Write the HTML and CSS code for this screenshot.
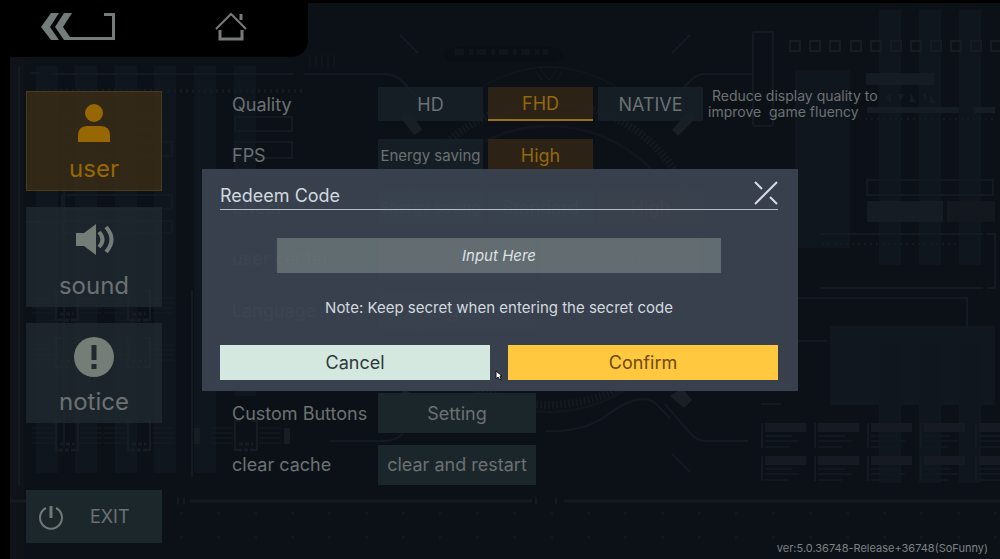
FILE: index.html
```html
<!DOCTYPE html>
<html lang="en">
	<head>
		<meta charset="UTF-8">
		<meta name="viewport" content="width=device-width, initial-scale=1">
		<title>Settings</title>
		<link rel="stylesheet" href="styles.css">
	</head>
	<body>
		<!-- circuit board behind the panels -->
		<svg class="backdrop" viewBox="0 0 1000 559" preserveAspectRatio="xMidYMid slice" aria-hidden="true">
			<defs>
				<pattern id="dots" width="37" height="24" patternUnits="userSpaceOnUse" x="15" y="512">
					<rect x="17" y="0" width="3" height="3" fill="#12171d"/>
				</pattern>
				<g id="card">
					<path d="M0 0v25" stroke="#141a21" stroke-width="2"/>
					<rect x="3" y="0" width="41" height="9" fill="#161b23"/>
					<path d="M3 13h27M3 18h34M3 24h24" stroke="#12181f" stroke-width="2"/>
				</g>
				<g id="chip" fill="none" stroke="#171c23">
					<path d="M5 0h-5v29h5M17 0h5v29h-5" stroke-width="2"/>
					<path d="M-24 7h22M-24 12h22M-24 17h22M-24 22h22M24 7h22M24 12h22M24 17h22M24 22h22"/>
					<path d="M4 23h14M3 29h16" stroke-width="3" stroke-dasharray="4 2"/>
				</g>
			</defs>
			<rect x="10" y="57" width="14" height="502" fill="#0f1317"/>
			<g fill="#10161d">
				<rect x="36" y="66" width="22" height="407"/>
				<rect x="75" y="66" width="22" height="407"/>
				<rect x="115" y="66" width="22" height="407"/>
				<rect x="154" y="66" width="22" height="407"/>
				<rect x="194" y="66" width="22" height="407"/>
				<rect x="234" y="66" width="22" height="330"/>
				<rect x="795" y="70" width="55" height="178"/>
				<rect x="879" y="10" width="22" height="255"/>
				<rect x="919" y="10" width="22" height="255"/>
				<rect x="959" y="10" width="22" height="255"/>
				<rect x="830" y="326" width="165" height="79" fill="#11171e"/>
				<rect x="879" y="345" width="22" height="138"/>
				<rect x="919" y="345" width="22" height="138"/>
				<rect x="959" y="345" width="22" height="138"/>
			</g>
			<g fill="none" stroke="#141a21" stroke-width="2">
				<path d="M19 66v420M53 74h240M30 73h10M192 290v186M26 222h38M26 117h38v330"/>
				<path d="M36 91h270" stroke-width="4" stroke-dasharray="2 4"/>
				<path d="M62 117h100v12h-100zM62 142h110v14h-110zM62 195h110v14h-110zM62 221h110v12h-110z"/>
				<path d="M235 117h57v14h-57zM235 142h57v16h-57z"/>
				<path d="M310 55v12M316 55v12M322 55v12M328 55v12M334 55v12" stroke-width="1"/>
				<path d="M304 74h82q10 0 18 9l22 25M400 35l18 18M690 35l-18 18M752 74h-48q-8 0-16 9l-22 25"/>
				<path d="M753 32h20v93M753 32v93M753 126h20"/>
				<path d="M867 180h126v15h-126zM820 234h163M987 234h8v54h-8M820 288h163M797 298h170v30M797 341h30"/>
				<path d="M822 244h138M865 119h130" stroke-dasharray="2 4"/>
				<path d="M330 441h55q12 0 20-10l18-20M748 441h-43q-8 0-16-9l-24-28M672 454l18 18M761 404h20"/>
				<path d="M545 431q40 2 65-18q35-25 50-5l10 10"/>
			</g>
			<g fill="none" stroke="#13191f">
				<circle cx="549" cy="254" r="151" stroke-width="8" stroke-dasharray="2 2"/>
				<circle cx="549" cy="269" r="143" stroke-width="3" stroke="#10161c"/>
				<path d="M450 110q99-86 198 0" stroke-width="1"/>
				<path d="M539 67h20l-10 13zM536 71l6 10M562 71l-6 10"/>
			</g>
			<g fill="#191f24">
				<path d="M406 112l8 4 8 14-8 5-13-17zM692 112l-8 4-12 14 6 6 16-16zM410 393l-9 13-5-5 8-13zM682 388l10 12-8 8-14-12z"/>
			</g>
			<path d="M444 52q4-5 18-5h82q14 0 18 5t-8 11h-96q-14 0-14-11z" fill="#0a0f15"/>
			<path d="M455 52h93" stroke="#0f151b" stroke-width="6" stroke-dasharray="9 5 4 4"/>
			<path d="M790 41h10v10h-10zM810 41h10v10h-10zM830 41h10v10h-10zM851 41h10v10h-10zM871 41h10v10h-10zM891 41h10v10h-10zM911 41h10v10h-10zM931 41h10v10h-10zM951 41h10v10h-10zM971 41h10v10h-10zM991 41h10v10h-10z" fill="none" stroke="#171c23" stroke-width="2"/>
			<g fill="#161c23">
				<rect x="866" y="73" width="68" height="12"/>
				<rect x="867" y="107" width="92" height="6"/>
				<rect x="973" y="107" width="22" height="6"/>
				<rect x="867" y="201" width="76" height="21"/>
				<rect x="947" y="201" width="48" height="21" fill="#12181e"/>
				<path d="M885 98l6-5v10zM898 94h6l-4 8zM910 93l6 9h-6zM922 93h4v9zM930 94l6 9h-6z"/>
			</g>
			<use href="#chip" x="56" y="291"/><use href="#chip" x="128" y="291"/>
			<use href="#chip" x="56" y="338"/><use href="#chip" x="128" y="338"/>
			<use href="#chip" x="56" y="421"/><use href="#chip" x="128" y="421"/><use href="#chip" x="235" y="421"/>
			<path d="M197 428v16M287 428v16" stroke="#171d23" stroke-width="6"/>
			<use href="#card" x="762" y="423"/><use href="#card" x="815" y="423"/><use href="#card" x="868" y="423"/><use href="#card" x="921" y="423"/><use href="#card" x="976" y="423"/>
			<use href="#card" x="762" y="456"/><use href="#card" x="815" y="456"/><use href="#card" x="868" y="456"/><use href="#card" x="921" y="456"/><use href="#card" x="976" y="456"/>
			<path d="M10 501h65M190 501h342M564 501h436" stroke="#141a20" stroke-width="3"/>
			<path d="M80 501h50M150 501h12M177 501h8M535 501h4M555 501h6" stroke="#141a20" stroke-width="7" stroke-dasharray="2 4"/>
			<rect x="180" y="512" width="820" height="47" fill="url(#dots)"/>
		</svg>

		<header class="topbar">
			<button class="nav-btn" type="button" aria-label="Back">
				<svg width="76" height="30" viewBox="0 0 76 30">
					<path d="M10 1h8L9 15l9 13h-8L0 15z" fill="#727c7a"/>
					<path d="M23 1h8l-9 14 7 10h42V4h-8V1h11v27H23l-9-13z" fill="#727c7a"/>
				</svg>
			</button>
			<button class="nav-btn" type="button" aria-label="Home">
				<svg width="32" height="30" viewBox="0 0 32 30" fill="none" stroke="#777c7b" stroke-width="3">
					<path d="M1 17L16 2l15 15" stroke-width="2"/>
					<path d="M5 18v9h22v-9"/>
					<path d="M26 2v6"/>
				</svg>
			</button>
		</header>

		<main class="panel">
			<nav class="sidebar">
				<button class="tab active" type="button">
					<svg width="44" height="44" viewBox="0 0 44 44" fill="currentColor">
						<circle cx="22" cy="12" r="9"/>
						<path d="M6 41v-6q0-10 9-10h14q9 0 9 10v6z"/>
					</svg>
					<span>user</span>
				</button>
				<button class="tab" type="button">
					<svg width="44" height="44" viewBox="0 0 44 44">
						<path d="M4 15h8l12-9v31l-12-9H4z" fill="#747d76"/>
						<path d="M27 14q7 7.500 0 15M34 9q11 12.500 0 25" fill="none" stroke="#747d76" stroke-width="4"/>
					</svg>
					<span>sound</span>
				</button>
				<button class="tab" type="button">
					<svg width="44" height="44" viewBox="0 0 44 44">
						<circle cx="22" cy="23" r="20" fill="#747d76"/>
						<path d="M22 11v15M22 30v5" stroke="#20292c" stroke-width="5"/>
					</svg>
					<span>notice</span>
				</button>
				<button class="exit" type="button">
					<svg width="26" height="26" viewBox="0 0 26 26" fill="none" stroke="#717877" stroke-width="2">
						<path d="M8 4a11 11 0 1 0 10 0"/>
						<path d="M13 2v12" stroke-width="3"/>
					</svg>
					<span>EXIT</span>
				</button>
			</nav>

			<section class="settings">
				<div class="row">
					<span class="name">Quality</span>
					<button class="opt" type="button">HD</button>
					<button class="opt on line" type="button">FHD</button>
					<button class="opt" type="button">NATIVE</button>
					<p class="hint">&nbsp;Reduce display quality to<br>improve &nbsp;game fluency</p>
				</div>
				<div class="row">
					<span class="name">FPS</span>
					<button class="opt small" type="button">Energy saving</button>
					<button class="opt on" type="button">High</button>
				</div>
				<div class="row">
					<span class="name">Effect</span>
					<button class="opt small" type="button">Energy saving</button>
					<button class="opt" type="button">Standard</button>
					<button class="opt on" type="button">High</button>
				</div>
				<div class="row">
					<span class="name">user center</span>
					<button class="opt wide" type="button"></button>
					<button class="opt wide" type="button">Facebook</button>
				</div>
				<div class="row">
					<span class="name">Language</span>
					<button class="opt wide" type="button">English</button>
				</div>
				<div class="row"></div>
				<div class="row">
					<span class="name">Custom Buttons</span>
					<button class="opt wide" type="button">Setting</button>
				</div>
				<div class="row">
					<span class="name">clear cache</span>
					<button class="opt wide" type="button">clear and restart</button>
				</div>
			</section>
		</main>

		<p class="version">ver:5.0.36748-Release+36748(SoFunny)</p>

		<div class="mask">
			<form class="dialog" role="dialog" aria-labelledby="dialogTitle">
				<div class="dialog-head">
					<label id="dialogTitle" for="code">Redeem Code</label>
					<button class="close" type="button" aria-label="Close">
						<svg width="24" height="24" viewBox="0 0 24 24" fill="none" stroke="#d4dce1" stroke-width="2">
							<path d="M23 1L1 23M1 1l7 7M16 16l7 7"/>
						</svg>
					</button>
				</div>
				<input class="code" id="code" type="text" placeholder="Input Here">
				<p class="note">Note: Keep secret when entering the secret code</p>
				<div class="actions">
					<button class="cancel" type="button">Cancel</button>
					<button class="confirm" type="button">Confirm</button>
				</div>
			</form>
		</div>

		<svg class="cursor" width="8" height="11" viewBox="0 0 8 11" aria-hidden="true">
			<path d="M1 1v8l2-2 2 3 1-1-1-3h2z" fill="#fff" stroke="#10151b" stroke-width="1"/>
		</svg>
	</body>
</html>
```

FILE: styles.css
```css
*{
	margin: 0;
	padding: 0;
	box-sizing: border-box;
}
body{
	display: flex;
	flex-direction: column;
	min-height: 100vh;
	background: #0c1118;
	border-top: 3px solid #000;
	color: #6c7173;
	font-family: Inter, "Noto Sans", sans-serif;
	font-size: 18px;
	font-weight: 400;
	position: relative;
	overflow: hidden;
}
button, input{
	border: 0;
	background: none;
	color: inherit;
	font: inherit;
}
button svg{
	display: block;
}
.backdrop{
	position: absolute;
	left: 0;
	top: -3px;
	width: 100%;
	height: 100vh;
}
/* top bar */
.topbar{
	position: relative;
	display: flex;
	align-items: center;
	gap: 98px;
	width: 308px;
	height: 54px;
	padding: 0 0 6px 41px;
	background: #000;
	border-radius: 0 0 16px 0;
}
/* main panel */
.panel{
	position: relative;
	flex: 1;
	display: flex;
	gap: 70px;
	border-left: 10px solid #000;
	padding: 27px 0 16px 16px;
}
.sidebar{
	display: flex;
	flex-direction: column;
	gap: 16px;
	width: 136px;
	padding-top: 7px;
}
.tab{
	display: flex;
	flex-direction: column;
	align-items: center;
	justify-content: flex-end;
	gap: 9px;
	height: 100px;
	padding-bottom: 6px;
	background: rgba(32, 43, 48, .75);
	font-size: 24px;
	line-height: 30px;
}
.tab.active{
	background: rgba(56, 43, 22, .85);
	border: 1px solid #4b3a17;
	color: #966703;
}
.exit{
	display: flex;
	align-items: center;
	gap: 26px;
	height: 53px;
	margin-top: auto;
	padding-left: 12px;
	background: #1c272c;
}
.settings{
	flex: 1;
	display: grid;
	grid-auto-rows: 40px;
	align-content: space-between;
	margin-bottom: 58px;
}
.row{
	display: flex;
	align-items: center;
	gap: 5px;
}
.name{
	width: 141px;
	white-space: nowrap;
}
.opt{
	width: 105px;
	height: 34px;
	background: rgba(24, 33, 40, .85);
	white-space: nowrap;
}
.opt.small{
	font-size: 15px;
}
.opt.on{
	background: rgba(49, 37, 22, .9);
	color: #93680f;
}
.opt.line{
	border-bottom: 2px solid #98701c;
}
.opt.wide{
	width: 158px;
	height: 40px;
	background: #1b262b;
}
.hint{
	font-size: 14px;
	line-height: 16px;
}
.version{
	position: absolute;
	right: 12px;
	bottom: 4px;
	color: #7d8183;
	font-size: 11px;
	line-height: 14px;
}
/* dialog */
.mask{
	position: absolute;
	left: 0;
	top: -3px;
	width: 100%;
	height: 100vh;
	display: flex;
	align-items: center;
	justify-content: center;
}
.dialog{
	display: flex;
	flex-direction: column;
	width: 596px;
	max-width: 100%;
	padding: 9px 20px 11px 18px;
	background: rgba(58, 67, 80, .96);
	color: #d2d9de;
}
.dialog-head{
	display: flex;
	align-items: center;
	justify-content: space-between;
	height: 32px;
	border-bottom: 1px solid #b4bcc3;
}
.dialog-head label{
	padding-top: 4px;
}
.close{
	height: 28px;
}
.code{
	height: 35px;
	margin: 28px 57px 0;
	background: rgba(116, 127, 128, .7);
	font-size: 15px;
	font-style: italic;
	text-align: center;
}
.code::placeholder{
	color: #dde2e2;
	opacity: 1;
}
.note{
	margin: 25px 0 27px;
	font-size: 15px;
	line-height: 20px;
	text-align: center;
}
.actions{
	display: flex;
	gap: 18px;
}
.actions button{
	flex: 1;
	height: 35px;
}
.actions .cancel{
	background: #d4e8df;
	color: #2e3a3c;
}
.actions .confirm{
	background: #ffc83e;
	color: #6c4a10;
}
.cursor{
	position: absolute;
	left: 495px;
	top: 367px;
}
```
